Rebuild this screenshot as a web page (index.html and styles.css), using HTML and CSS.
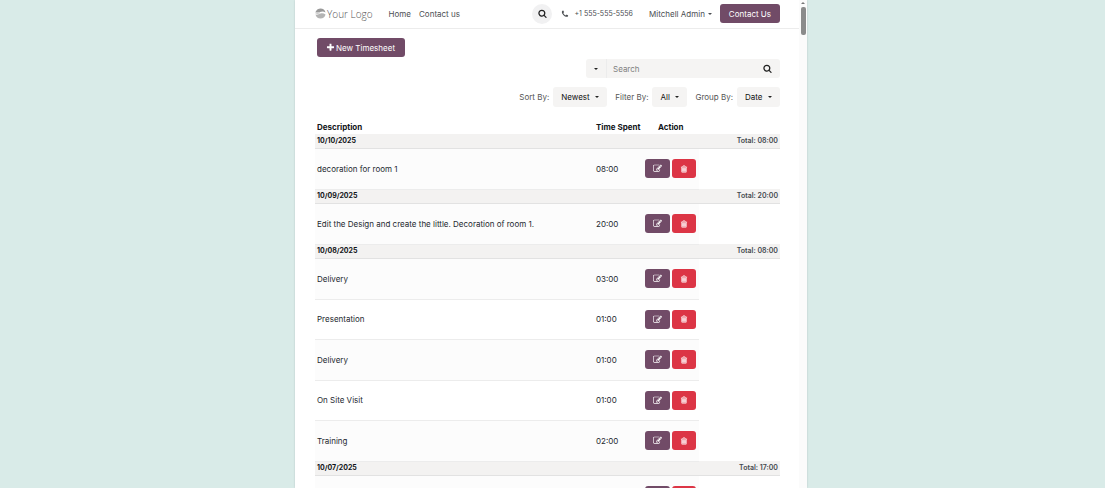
FILE: index.html
```html
<!DOCTYPE html>
<html lang="en">
<head>
    <meta charset="UTF-8">
    <meta name="viewport" content="width=device-width, initial-scale=1.0">
    <title>Timesheets</title>
    <link rel="stylesheet" href="styles.css">
</head>
<body>
    <!-- Icons -->
    <svg class="sprite" aria-hidden="true">
        <symbol id="search" viewBox="0 0 1792 1792"><path d="M1216 832q0-185-131.5-316.5t-316.5-131.5-316.5 131.5-131.5 316.5 131.5 316.5 316.5 131.5 316.5-131.5 131.5-316.5zm512 832q0 52-38 90t-90 38q-54 0-90-38l-343-342q-179 124-399 124-143 0-273.5-55.5t-225-150-150-225-55.5-273.5 55.5-273.5 150-225 225-150 273.5-55.5 273.5 55.5 225 150 150 225 55.5 273.5q0 220-124 399l343 343q37 37 37 90z"/></symbol>
        <symbol id="phone" viewBox="0 0 1792 1792"><path d="M1600 1240q0 27-10 70.5t-21 68.5q-21 50-122 106-94 51-186 51-27 0-53-3.500t-57.500-12.500-47-14.500-55.500-20.500-49-18q-98-35-175-83-127-79-264-216t-216-264q-48-77-83-175-3-9-18-49t-20.500-55.500-14.500-47-12.500-57.500-3.500-53q0-92 51-186 56-101 106-122 25-11 68.500-21t70.500-10q14 0 21 3 18 6 53 76 11 19 30 54t35 63.500 31 53.500q3 4 17.500 25t21.500 35.500 7 28.500q0 20-28.500 50t-62 55-62 53-28.500 46q0 9 5 22.500t8.500 20.500 14 24 11.500 19q76 137 174 235t235 174q2 1 19 11.500t24 14 20.500 8.500 22.500 5q18 0 46-28.500t53-62 55-62 50-28.500q14 0 28.500 7t35.500 21.500 25 17.500q25 15 53.500 31t63.500 35 54 30q70 35 76 53 3 7 3 21z"/></symbol>
        <symbol id="plus" viewBox="0 0 1792 1792"><path d="M1600 736v192q0 40-28 68t-68 28h-416v416q0 40-28 68t-68 28h-192q-40 0-68-28t-28-68v-416h-416q-40 0-68-28t-28-68v-192q0-40 28-68t68-28h416v-416q0-40 28-68t68-28h192q40 0 68 28t28 68v416h416q40 0 68 28t28 68z"/></symbol>
        <symbol id="edit" viewBox="0 0 1792 1792"><path d="M888 1184l116-116-152-152-116 116v56h96v96h56zm440-720q-16-16-33 1l-350 350q-17 17-1 33t33-1l350-350q17-17 1-33zm80 594v190q0 119-84.500 203.500t-203.500 84.500h-832q-119 0-203.500-84.500t-84.500-203.500v-832q0-119 84.500-203.500t203.500-84.500h832q63 0 117 25 15 7 18 23 3 17-9 29l-49 49q-14 14-32 8-23-6-45-6h-832q-66 0-113 47t-47 113v832q0 66 47 113t113 47h832q66 0 113-47t47-113v-126q0-13 9-22l64-64q15-15 35-7t20 29zm-96-738l288 288-672 672h-288v-288zm444 132l-92 92-288-288 92-92q28-28 68-28t68 28l152 152q28 28 28 68t-28 68z"/></symbol>
        <symbol id="trash" viewBox="0 0 1792 1792"><path d="M704 736v576q0 14-9 23t-23 9h-64q-14 0-23-9t-9-23v-576q0-14 9-23t23-9h64q14 0 23 9t9 23zm256 0v576q0 14-9 23t-23 9h-64q-14 0-23-9t-9-23v-576q0-14 9-23t23-9h64q14 0 23 9t9 23zm256 0v576q0 14-9 23t-23 9h-64q-14 0-23-9t-9-23v-576q0-14 9-23t23-9h64q14 0 23 9t9 23zm128 724v-948h-896v948q0 22 7 40.500t14.500 27 10.500 8.500h832q3 0 10.500-8.500t14.500-27 7-40.500zm-672-1076h448l-48-117q-7-9-17-11h-317q-10 2-17 11zm928 32v64q0 14-9 23t-23 9h-96v948q0 83-47 143.500t-113 60.500h-832q-66 0-113-58.500t-47-141.500v-952h-96q-14 0-23-9t-9-23v-64q0-14 9-23t23-9h309l70-167q15-37 54-63t79-26h320q40 0 79 26t54 63l70 167h309q14 0 23 9t9 23z"/><path opacity=".6" d="M448 512h896v1020h-896z"/></symbol>
    </svg>

    <div class="window">
        <div class="page">
            <header>
                <a class="logo" href="#">
                    <svg viewBox="0 0 22 22" aria-hidden="true">
                        <path fill="#999" d="M1 8C3 3 7 1 11 1c5 0 9 3 10 8-4-3-8-2-11-1-3 1-6 1-9 0z"/>
                        <path fill="#c9c9c9" d="M1 8c3 1 6 1 9 0l-1 3c-3 1-5 1-8 0z"/>
                        <path fill="#b4b4b4" d="M1 13c4 1 7-1 10-2 4-1 7 0 10 2-1 5-5 8-10 8s-9-3-10-8z"/>
                    </svg>
                    <span>Your Logo</span>
                </a>
                <nav>
                    <a href="#">Home</a>
                    <a href="#">Contact us</a>
                </nav>
                <button class="round" aria-label="Search site"><svg class="icon"><use href="#search"/></svg></button>
                <a class="phone" href="tel:+15555555556"><svg class="icon"><use href="#phone"/></svg><small>+1 555-555-5556</small></a>
                <button class="user">Mitchell Admin<span class="caret"></span></button>
                <a class="btn contact" href="#">Contact Us</a>
            </header>

            <main>
                <button class="btn new"><svg class="icon"><use href="#plus"/></svg>New Timesheet</button>

                <form class="search">
                    <button type="button" class="scope" aria-label="Search in"><span class="caret"></span></button>
                    <input type="text" placeholder="Search" aria-label="Search">
                    <button type="button" class="go" aria-label="Search"><svg class="icon"><use href="#search"/></svg></button>
                </form>

                <div class="filters">
                    <label for="sort">Sort By:</label>
                    <span class="select"><select id="sort"><option>Newest</option></select></span>
                    <label for="filter">Filter By:</label>
                    <span class="select"><select id="filter"><option>All</option></select></span>
                    <label for="group">Group By:</label>
                    <span class="select"><select id="group"><option>Date</option></select></span>
                </div>

                <table>
                    <colgroup>
                        <col>
                        <col class="col-time">
                        <col class="col-action">
                        <col class="col-rest">
                    </colgroup>
                    <thead>
                        <tr><th>Description</th><th>Time Spent</th><th class="action">Action</th></tr>
                    </thead>
                    <tbody>
                        <tr class="day"><th colspan="2">10/10/2025</th><td colspan="2">Total: 08:00</td></tr>
                        <tr class="odd"><td>decoration for room 1</td><td>08:00</td><td><div class="actions"><button class="btn edit" aria-label="Edit"><svg class="icon"><use href="#edit"/></svg></button><button class="btn delete" aria-label="Delete"><svg class="icon"><use href="#trash"/></svg></button></div></td></tr>
                    </tbody>
                    <tbody>
                        <tr class="day"><th colspan="2">10/09/2025</th><td colspan="2">Total: 20:00</td></tr>
                        <tr class="odd"><td>Edit the Design and create the little. Decoration of room 1.</td><td>20:00</td><td><div class="actions"><button class="btn edit" aria-label="Edit"><svg class="icon"><use href="#edit"/></svg></button><button class="btn delete" aria-label="Delete"><svg class="icon"><use href="#trash"/></svg></button></div></td></tr>
                    </tbody>
                    <tbody>
                        <tr class="day"><th colspan="2">10/08/2025</th><td colspan="2">Total: 08:00</td></tr>
                        <tr class="odd"><td>Delivery</td><td>03:00</td><td><div class="actions"><button class="btn edit" aria-label="Edit"><svg class="icon"><use href="#edit"/></svg></button><button class="btn delete" aria-label="Delete"><svg class="icon"><use href="#trash"/></svg></button></div></td></tr>
                        <tr><td>Presentation</td><td>01:00</td><td><div class="actions"><button class="btn edit" aria-label="Edit"><svg class="icon"><use href="#edit"/></svg></button><button class="btn delete" aria-label="Delete"><svg class="icon"><use href="#trash"/></svg></button></div></td></tr>
                        <tr class="odd"><td>Delivery</td><td>01:00</td><td><div class="actions"><button class="btn edit" aria-label="Edit"><svg class="icon"><use href="#edit"/></svg></button><button class="btn delete" aria-label="Delete"><svg class="icon"><use href="#trash"/></svg></button></div></td></tr>
                        <tr><td>On Site Visit</td><td>01:00</td><td><div class="actions"><button class="btn edit" aria-label="Edit"><svg class="icon"><use href="#edit"/></svg></button><button class="btn delete" aria-label="Delete"><svg class="icon"><use href="#trash"/></svg></button></div></td></tr>
                        <tr class="odd"><td>Training</td><td>02:00</td><td><div class="actions"><button class="btn edit" aria-label="Edit"><svg class="icon"><use href="#edit"/></svg></button><button class="btn delete" aria-label="Delete"><svg class="icon"><use href="#trash"/></svg></button></div></td></tr>
                    </tbody>
                    <tbody>
                        <tr class="day"><th colspan="2">10/07/2025</th><td colspan="2">Total: 17:00</td></tr>
                        <tr class="odd"><td></td><td></td><td><div class="actions"><button class="btn edit" aria-label="Edit"><svg class="icon"><use href="#edit"/></svg></button><button class="btn delete" aria-label="Delete"><svg class="icon"><use href="#trash"/></svg></button></div></td></tr>
                    </tbody>
                </table>
            </main>
        </div>
        <div class="scrollbar"><span class="up"></span><span class="thumb"></span></div>
    </div>
</body>
</html>
```
FILE: styles.css
```css
* {
    box-sizing: border-box;
}

body {
    margin: 0;
    padding-right: 3px;
    height: 100vh;
    overflow: hidden;
    background: #d9ebe8;
    font-family: Inter, sans-serif;
    font-size: 8px;
    line-height: 12px;
    color: #24292f;
}

a {
    color: inherit;
    text-decoration: none;
}

button, input, select {
    font: inherit;
    color: inherit;
    border: 0;
    margin: 0;
    padding: 0;
    background: none;
}

.sprite {
    display: none;
}

.icon {
    width: 9px;
    height: 9px;
    fill: currentColor;
    flex: none;
}

.caret {
    border: 3px solid transparent;
    border-top-color: currentColor;
    border-bottom: 0;
}

.window {
    display: flex;
    max-width: 512px;
    height: 100%;
    margin: 0 auto;
    background: #fff;
    box-shadow: 0 0 2px rgba(0, 0, 0, 0.15);
}

.page {
    flex: 1;
    min-width: 0;
    overflow: hidden;
}

/* Header */
header {
    display: flex;
    align-items: center;
    height: 29px;
    padding: 0 19px 1px 20px;
    border-bottom: 1px solid #ececec;
    color: #4b4e52;
}

.logo {
    display: flex;
    align-items: center;
    gap: 1px;
    font-family: "Open Sans", sans-serif;
    font-size: 10px;
    font-weight: 300;
    color: #555;
}

.logo svg {
    width: 11px;
    height: 11px;
}

nav {
    display: flex;
    gap: 8px;
    margin-left: 16px;
    margin-right: auto;
}

.round {
    display: flex;
    align-items: center;
    justify-content: center;
    width: 20px;
    height: 20px;
    border-radius: 50%;
    background: #f1f1f2;
    color: #222;
}

.phone {
    display: flex;
    align-items: center;
    gap: 5px;
    margin-left: 9px;
}

.phone .icon {
    width: 8px;
    height: 8px;
}

.phone small {
    font-size: 7px;
}

.user {
    display: flex;
    align-items: center;
    gap: 3px;
    margin-left: 16px;
}

.user .caret, .scope .caret {
    border-width: 2px;
    border-bottom: 0;
}

.btn {
    display: flex;
    align-items: center;
    justify-content: center;
    height: 19px;
    border-radius: 3px;
    background: #714b67;
    color: #fff;
}

.contact {
    margin-left: 8px;
    padding: 0 9px;
}

/* Toolbar */
main {
    padding: 9px 19px 0 20px;
}

.new {
    gap: 1px;
    margin-left: 2px;
    padding: 0 10px 0 9px;
}

.search {
    display: flex;
    width: 194px;
    height: 19px;
    margin: 2px 0 9px auto;
    border-radius: 3px;
    background: #f5f4f3;
}

.scope {
    display: flex;
    align-items: center;
    justify-content: center;
    width: 21px;
    border-right: 1px solid #ececec;
    color: #222;
}

.search input {
    flex: 1;
    min-width: 0;
    padding: 0 6px;
    outline: 0;
}

.search input::placeholder {
    color: #808080;
}

.go {
    display: flex;
    align-items: center;
    justify-content: center;
    width: 25px;
    color: #222;
}

.filters {
    display: flex;
    align-items: center;
    justify-content: flex-end;
    color: #555;
}

.filters label {
    margin-left: 8px;
    margin-right: 4px;
}

.select {
    position: relative;
}

.select select {
    display: block;
    height: 20px;
    padding: 0 17px 0 8px;
    appearance: none;
    border-radius: 3px;
    background: #f5f4f3;
    color: #111;
}

.select::after {
    content: "";
    position: absolute;
    top: 9px;
    right: 8px;
    border: 2px solid transparent;
    border-top-color: #222;
    border-bottom: 0;
    pointer-events: none;
}

/* Timesheet table */
table {
    width: 100%;
    margin-top: 13px;
    table-layout: fixed;
    border-collapse: collapse;
}

.col-time {
    width: 49px;
}

.col-action {
    width: 56px;
}

.col-rest {
    width: 81px;
}

th, td {
    padding: 0 2px;
    text-align: left;
    white-space: nowrap;
}

thead th {
    height: 14px;
    color: #111418;
}

thead .action {
    padding-left: 15px;
}

tbody td {
    height: 40px;
    border-bottom: 1px solid #ececec;
}

tbody .odd td {
    height: 41px;
    background: #fcfcfc;
}

tbody .day th, tbody .day td {
    height: 14px;
    border-bottom: 1px solid #e2e2e2;
    background: #f3f2f1;
    font-size: 7px;
    font-weight: 700;
    color: #111418;
}

tbody .day td {
    text-align: right;
    font-weight: 600;
    color: #44494f;
}

.actions {
    display: flex;
    gap: 2px;
}

.edit {
    width: 25px;
}

.delete {
    width: 24px;
    background: #dc3545;
}

.actions .icon {
    width: 9px;
    height: 9px;
}

.delete .icon {
    width: 8px;
    height: 8px;
}

/* Scrollbar */
.scrollbar {
    display: flex;
    flex-direction: column;
    align-items: center;
    gap: 3px;
    width: 8px;
    padding-top: 2px;
    background: #fbfbfb;
}

.up {
    border: 2px solid transparent;
    border-bottom-color: #777;
    border-top: 0;
}

.thumb {
    width: 5px;
    height: 28px;
    border-radius: 2px;
    background: #8b8b8b;
}
```
